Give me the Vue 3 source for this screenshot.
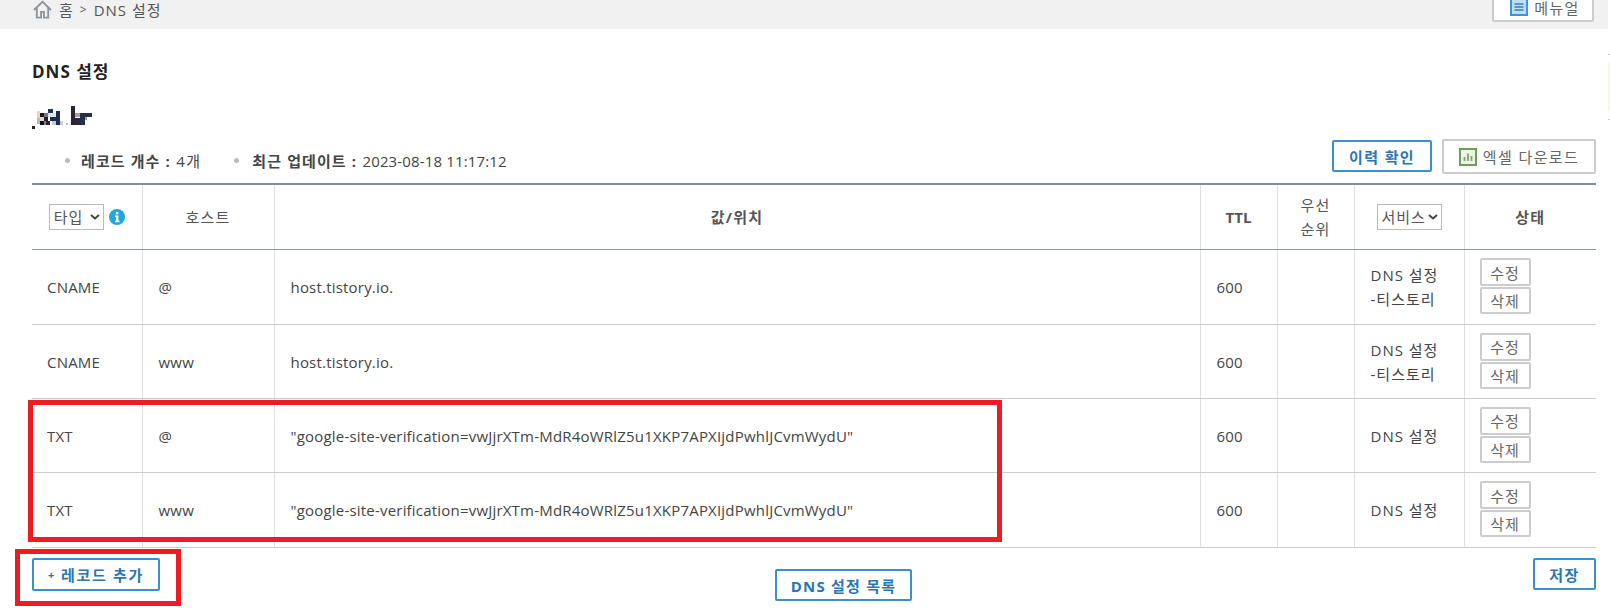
<script setup>
const rows = [
  { type: 'CNAME', host: '@', value: 'host.tistory.io.', ttl: '600', service: ['DNS 설정', '-티스토리'] },
  { type: 'CNAME', host: 'www', value: 'host.tistory.io.', ttl: '600', service: ['DNS 설정', '-티스토리'] },
  { type: 'TXT', host: '@', value: '"google-site-verification=vwJjrXTm-MdR4oWRlZ5u1XKP7APXIjdPwhlJCvmWydU"', ttl: '600', service: ['DNS 설정'] },
  { type: 'TXT', host: 'www', value: '"google-site-verification=vwJjrXTm-MdR4oWRlZ5u1XKP7APXIjdPwhlJCvmWydU"', ttl: '600', service: ['DNS 설정'] },
]
const mosaic = [
  [0, 21, 3, 3, '#2b2020'], [5, 6, 3, 7, '#e3d8c4'], [5, 13, 3, 6, '#a9bccb'],
  [8, 8, 4, 4, '#1c1820'], [12, 8, 4, 4, '#7a7680'], [8, 12, 4, 4, '#e2d8c8'], [12, 12, 4, 4, '#211c26'],
  [8, 16, 4, 4, '#141014'], [12, 16, 2, 4, '#8a8690'], [14, 16, 4, 4, '#2a2630'],
  [16, 4, 5, 4, '#1f3a50'], [16, 8, 8, 4, '#dfe6f0'], [18, 12, 6, 4, '#1e2d50'], [20, 16, 4, 4, '#c0cad8'],
  [24, 6, 4, 14, '#1f2b4a'], [28, 16, 3, 4, '#c9d0da'],
  [34, 18, 2, 2, '#bbb'],
  [39, 1, 4, 19, '#2a2235'], [43, 8, 5, 4, '#a9a29a'], [43, 13, 5, 7, '#2d2736'],
  [48, 8, 5, 12, '#26304a'], [53, 8, 7, 4, '#27304a'], [53, 12, 2, 3, '#9aa0ae'],
]
</script>

<template>
  <div class="page">
    <header class="crumb">
      <div class="trail">
        <svg class="home" viewBox="0 0 20 20" width="21" height="19" aria-hidden="true">
          <path d="M1 10.5 10 2l9 8.5M4 8.5V18.5h4.5v-6h3v6H16V8.5" fill="none" stroke="#8f9599" stroke-width="2" />
        </svg>
        <span>홈</span><span class="gt">&gt;</span><span>DNS 설정</span>
      </div>
      <button class="btn gray manual" type="button">
        <svg viewBox="0 0 18 18" width="18" height="18" aria-hidden="true">
          <rect x="1" y="1" width="16" height="16" fill="#bfdff5" stroke="#3a97dc" stroke-width="2" />
          <path d="M4.5 6h9M4.5 9h9M4.5 12h9" stroke="#3a7fb5" stroke-width="1.4" />
        </svg>
        메뉴얼
      </button>
    </header>

    <main class="content">
      <h1 class="title">DNS 설정</h1>
      <svg class="domain" width="60" height="25" viewBox="0 0 60 25" role="img" aria-label="도메인">
        <rect v-for="(b, i) in mosaic" :key="i" :x="b[0]" :y="b[1]" :width="b[2]" :height="b[3]" :fill="b[4]" />
      </svg>

      <div class="meta">
        <div class="stats">
          <span class="stat"><b>레코드 개수 :</b> 4개</span>
          <span class="stat second"><b>최근 업데이트 :</b> <span class="latin">2023-08-18 11:17:12</span></span>
        </div>
        <div class="actions">
          <button class="btn blue history" type="button">이력 확인</button>
          <button class="btn gray excel" type="button">
            <svg viewBox="0 0 18 18" width="18" height="18" aria-hidden="true">
              <rect x="1" y="1" width="16" height="16" fill="#eef5e8" stroke="#6c9e58" stroke-width="2" />
              <path d="M5.5 13V9M9 13V5.5M12.5 13V8" stroke="#7aa667" stroke-width="1.8" />
            </svg>
            엑셀 다운로드
          </button>
        </div>
      </div>

      <table class="records">
        <colgroup>
          <col style="width:110px" /><col style="width:132px" /><col />
          <col style="width:77px" /><col style="width:77px" /><col style="width:110px" /><col style="width:132px" />
        </colgroup>
        <thead>
          <tr>
            <th>
              <span class="type-head">
                <select class="pick type"><option>타입</option></select>
                <svg viewBox="0 0 16 16" width="16" height="16" aria-hidden="true">
                  <circle cx="8" cy="8" r="8" fill="#1fa7de" />
                  <rect x="6.8" y="3" width="2.6" height="2.4" fill="#fff" />
                  <path d="M6 6.6h3.4v5.2h1v1.4H6v-1.4h1V8H6z" fill="#fff" />
                </svg>
              </span>
            </th>
            <th class="thin">호스트</th>
            <th>값/위치</th>
            <th class="ttl">TTL</th>
            <th class="thin">우선<br />순위</th>
            <th><select class="pick service"><option>서비스</option></select></th>
            <th>상태</th>
          </tr>
        </thead>
        <tbody>
          <tr v-for="(r, i) in rows" :key="i">
            <td>{{ r.type }}</td>
            <td>{{ r.host }}</td>
            <td>{{ r.value }}</td>
            <td>{{ r.ttl }}</td>
            <td></td>
            <td class="svc"><div v-for="s in r.service" :key="s">{{ s }}</div></td>
            <td class="ops">
              <button class="btn gray mini" type="button">수정</button>
              <button class="btn gray mini" type="button">삭제</button>
            </td>
          </tr>
        </tbody>
      </table>

      <footer class="foot">
        <button class="btn blue add" type="button"><small>+</small> 레코드 추가</button>
        <div class="mid"><button class="btn blue list" type="button">DNS 설정 목록</button></div>
        <button class="btn blue save" type="button">저장</button>
      </footer>
    </main>

    <div class="mark mark-rows"></div>
    <div class="mark mark-add"></div>
    <div class="edge tick-a"></div>
    <div class="edge strip"></div>
    <div class="edge tick-b"></div>
  </div>
</template>

<style scoped>
.page {
  position: relative;
  width: 1610px;
  height: 613px;
  overflow: hidden;
  background: #fff;
  color: #444;
  font-family: "Open Sans", "Noto Sans CJK KR", sans-serif;
  font-size: 15px;
}
button, select { font-family: inherit; }
.crumb {
  width: 1608px;
  height: 29px;
  box-sizing: border-box;
  padding: 0 14px 7px 32px;
  background: #f1f1f1;
  display: flex;
  justify-content: space-between;
  align-items: flex-end;
}
.trail {
  align-self: flex-start;
  display: flex;
  align-items: center;
  gap: 6px;
  height: 18px;
  color: #555;
  letter-spacing: 1px;
}
.gt { font-size: 12px; }
.btn {
  box-sizing: border-box;
  background: #fff;
  border-radius: 2px;
  font-size: 15px;
  padding: 0;
  display: inline-flex;
  align-items: center;
  justify-content: center;
  letter-spacing: 1.4px;
}
.btn.gray { border: 2px solid #ccc; color: #666; }
.btn.blue { border: 2px solid #3a90cf; color: #2a76b4; font-weight: 700; }
.manual { width: 102px; height: 34px; gap: 6px; flex: none; padding: 4px 0 0 4px; }
.content { padding: 0 14px 0 32px; }
.title {
  margin: 0;
  padding-top: 32px;
  font-size: 17px;
  line-height: 22px;
  font-weight: 700;
  color: #222;
  letter-spacing: 1px;
}
.domain { display: block; margin-top: 22px; }
.meta {
  margin-top: 9px;
  height: 44px;
  display: flex;
  justify-content: space-between;
  align-items: flex-start;
}
.stats { display: flex; padding: 11px 0 0 33px; gap: 33px; line-height: 22px; letter-spacing: 1.4px; }
.stat { position: relative; padding-left: 16px; }
.stat.second { padding-left: 18px; }
.stat::before {
  content: "";
  position: absolute;
  left: 0;
  top: 8px;
  width: 5px;
  height: 5px;
  border-radius: 50%;
  background: #b8b8b8;
}
.stat b { font-weight: 700; color: #444; letter-spacing: 1.1px; }
.latin { letter-spacing: 0.15px; }
.actions { display: flex; gap: 10px; }
.history { width: 100px; height: 32px; margin-top: 1px; }
.excel { width: 154px; height: 35px; gap: 6px; }
.records {
  width: 1564px;
  table-layout: fixed;
  border-collapse: collapse;
  border-top: 2px solid #7f929c;
}
.records th {
  height: 64px;
  padding: 0;
  border-bottom: 1px solid #8a979f;
  border-left: 1px solid #e0e0e0;
  font-weight: 700;
  text-align: center;
  line-height: 24px;
  color: #555;
  letter-spacing: 1.2px;
}
.records th.ttl { letter-spacing: 0; }
.records th.thin { font-weight: 400; }
.records td {
  height: 73px;
  padding: 0 0 0 16px;
  border-bottom: 1px solid #ccc;
  border-left: 1px solid #e0e0e0;
  line-height: 24px;
  letter-spacing: 0.2px;
}
.records th:first-child, .records td:first-child { border-left: 0; }
.records td:first-child { padding-left: 15px; }
.records tbody tr:first-child td, .records tbody tr:last-child td { height: 74px; }
.type-head { display: inline-flex; align-items: center; gap: 5px; }
.pick {
  appearance: none;
  box-sizing: border-box;
  height: 26px;
  border: 1px solid #bbb;
  background: #fff url("data:image/svg+xml,%3Csvg xmlns='http://www.w3.org/2000/svg' width='10' height='6'%3E%3Cpath d='M1 1l4 3.5L9 1' fill='none' stroke='%23444' stroke-width='2'/%3E%3C/svg%3E") no-repeat right 3px center;
  color: #555;
  font-size: 15px;
  letter-spacing: 1px;
  padding: 0 0 0 4px;
  border-radius: 0;
}
.pick.type { width: 55px; }
.pick.service { width: 65px; }
.records td.svc { padding-left: 16px; letter-spacing: 1px; }
.records td.ops { padding-left: 15px; }
.ops .mini { display: flex; width: 51px; height: 28px; letter-spacing: 1px; margin-top: -2px; }
.ops .mini + .mini { margin-top: 1px; height: 27px; }
.foot {
  display: flex;
  align-items: flex-start;
  padding-top: 10px;
}
.add { width: 128px; height: 33px; letter-spacing: 1.7px; }
.add small { font-size: 11px; margin-right: 5px; }
.mid { flex: 1; display: flex; justify-content: center; padding-top: 11px; padding-right: 6px; }
.list { width: 137px; height: 32px; letter-spacing: 1.2px; }
.save { width: 63px; height: 32px; }
.mark {
  position: absolute;
  box-sizing: border-box;
  border: 5px solid #ed1c24;
  pointer-events: none;
}
.mark-rows { left: 28px; top: 400px; width: 974px; height: 142px; }
.mark-add { left: 15px; top: 549px; width: 166px; height: 57px; }
.edge { position: absolute; right: 0; width: 2px; }
.tick-a { top: 54px; height: 1px; background: #ccc; }
.strip { top: 63px; height: 48px; background: #fdf5df; }
.tick-b { top: 119px; height: 1px; background: #ccc; }
</style>
